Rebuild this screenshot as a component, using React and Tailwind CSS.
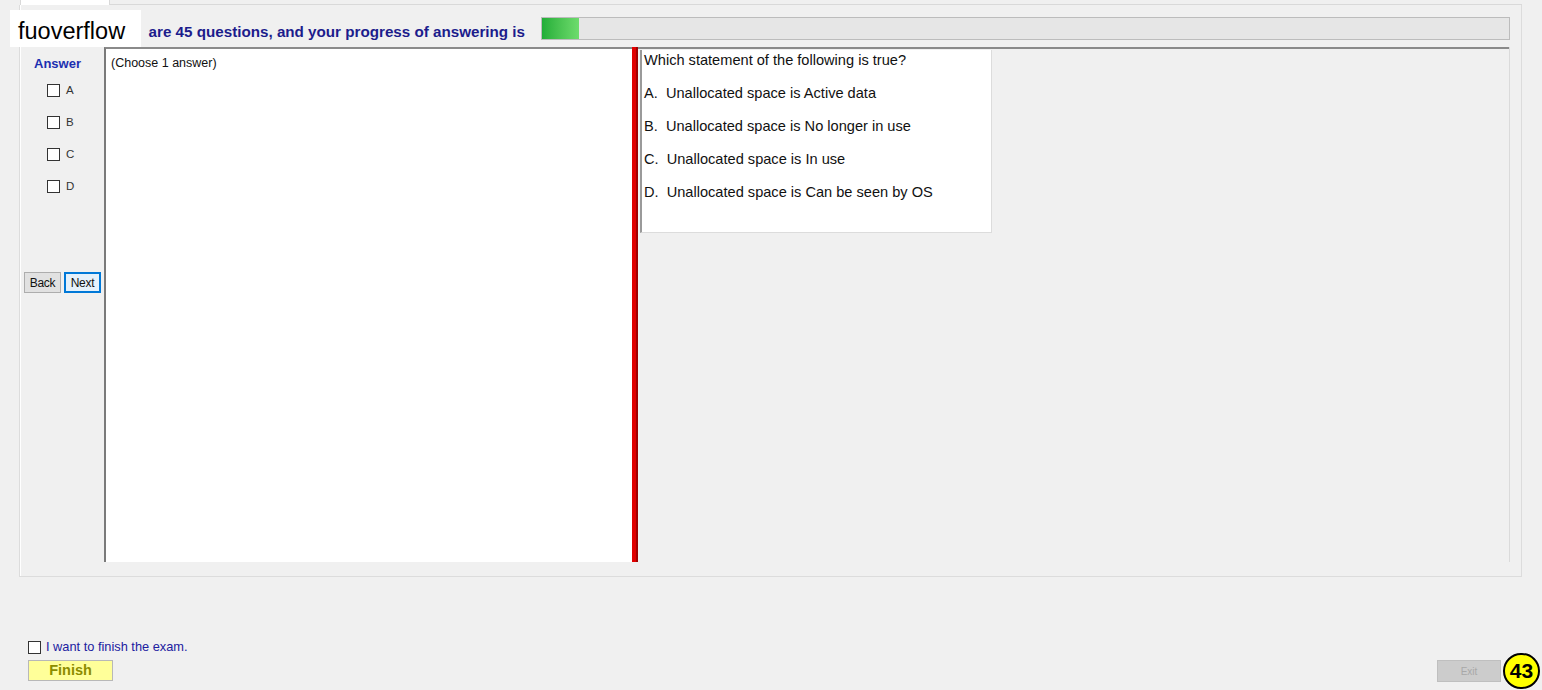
import React from "react";

const F = { fontFamily: '"Liberation Sans", Arial, sans-serif' };

function Box() {
  return <div className="w-[13px] h-[13px] border border-[#333] bg-white shrink-0" />;
}

export default function App() {
  return (
    <div className="relative w-[1542px] h-[690px] bg-[#f0f0f0] overflow-hidden" style={F}>
      {/* tab control */}
      <div className="pl-[19px] pr-[20px]">
        <div className="h-[5px] flex">
          <div className="ml-[1px] w-[90px] h-[5px] bg-white border-x border-[#d9d9d9]" />
          <div className="flex-1 border-b border-[#d9d9d9]" />
        </div>
        <div className="h-[572px] pt-[12px] border border-t-0 border-[#dcdcdc] bg-[#f0f0f0] shadow-[inset_1px_0_0_#ffffff]">
          {/* top row */}
          <div className="flex items-start h-[23px]">
            <div className="w-[506px] text-right text-[15.2px] font-bold text-[#1c1c8c] pt-[7px] pr-[1px] leading-[16px] whitespace-nowrap">
              are 45 questions, and your progress of answering is
            </div>
            <div className="ml-[15px] mr-[11px] flex-1 h-[23px] bg-[#e6e6e6] border border-[#bcbcbc] flex">
              <div className="w-[37px] h-full bg-gradient-to-r from-[#1fae38] to-[#6ddc6d]" />
            </div>
          </div>
          {/* main panel */}
          <div className="flex ml-[3px] mr-[11px] mt-[7px] h-[515px] border-r border-[#dadada]">
            <div className="w-[81px] flex flex-col pt-[9px]">
              <div className="pl-[11px] text-[13px] font-bold text-[#1c2fb0] leading-[16px]">Answer</div>
              <div className="flex flex-col gap-[19px] mt-[12px] pl-[24px]">
                {["A", "B", "C", "D"].map((l) => (
                  <div key={l} className="flex items-center gap-[6px] h-[13px]">
                    <Box />
                    <span className="text-[11.5px] text-[#333] leading-[13px]">{l}</span>
                  </div>
                ))}
              </div>
              <div className="flex gap-[3px] mt-[79px] pl-[1px]">
                <div className="w-[37px] h-[21px] bg-[#e1e1e1] border border-[#adadad] text-[12px] text-[#111] flex items-center justify-center tracking-[-0.3px]">
                  Back
                </div>
                <div className="w-[37px] h-[21px] bg-[#e5f1fb] border-2 border-[#0078d7] text-[12px] text-[#111] flex items-center justify-center tracking-[-0.3px]">
                  Next
                </div>
              </div>
            </div>
            <div className="w-[528px] bg-white border-l-2 border-t-2 border-l-[#7a7a7a] border-t-[#8a8a8a] pl-[5px] pt-[7px]">
              <div className="text-[12.5px] text-[#111] leading-[14px]">(Choose 1 answer)</div>
            </div>
            <div className="w-[6px] bg-[#e00000] border-r-2 border-[#a00000]" />
            <div className="flex-1 border-t-2 border-[#8a8a8a] pl-[2px] pt-[1px]">
              <div className="w-[352px] h-[183px] bg-white border-l-2 border-[#9a9a9a] border-r border-b border-r-[#dcdcdc] border-b-[#dcdcdc] pl-[2px] pt-[2px] text-[14.6px] text-[#111] leading-[17px]">
                <div>Which statement of the following is true?</div>
                <div className="mt-[16px]">A.&nbsp; Unallocated space is Active data</div>
                <div className="mt-[16px]">B.&nbsp; Unallocated space is No longer in use</div>
                <div className="mt-[16px]">C.&nbsp; Unallocated space is In use</div>
                <div className="mt-[16px]">D.&nbsp; Unallocated space is Can be seen by OS</div>
              </div>
            </div>
          </div>
        </div>
      </div>
      {/* bottom area */}
      <div className="flex items-end justify-between pl-[28px] pr-[41px] mt-[63px]">
        <div className="flex flex-col">
          <div className="flex items-center gap-[5px]">
            <Box />
            <span className="text-[12.8px] text-[#2020a0] leading-[14px]">I want to finish the exam.</span>
          </div>
          <div className="mt-[6px] w-[85px] h-[21px] bg-[#ffff99] border border-[#b8b8b8] text-[14.5px] font-bold text-[#8c8c00] flex items-center justify-center">
            Finish
          </div>
        </div>
        <div className="w-[64px] h-[22px] bg-[#cccccc] border border-[#bfbfbf] text-[10px] text-[#a8a8a8] flex items-center justify-center mb-[-1px]">
          Exit
        </div>
      </div>
      {/* overlays */}
      <div className="absolute left-[10px] top-[10px] w-[131px] h-[37px] bg-white flex items-center pl-[8px] pt-[6px] text-[23.5px] text-black">
        fuoverflow
      </div>
      <div className="absolute left-[1503px] top-[653px] w-[37px] h-[36px] rounded-full bg-[#ffff00] border-2 border-black flex items-center justify-center text-[21px] font-bold text-black">
        43
      </div>
    </div>
  );
}
